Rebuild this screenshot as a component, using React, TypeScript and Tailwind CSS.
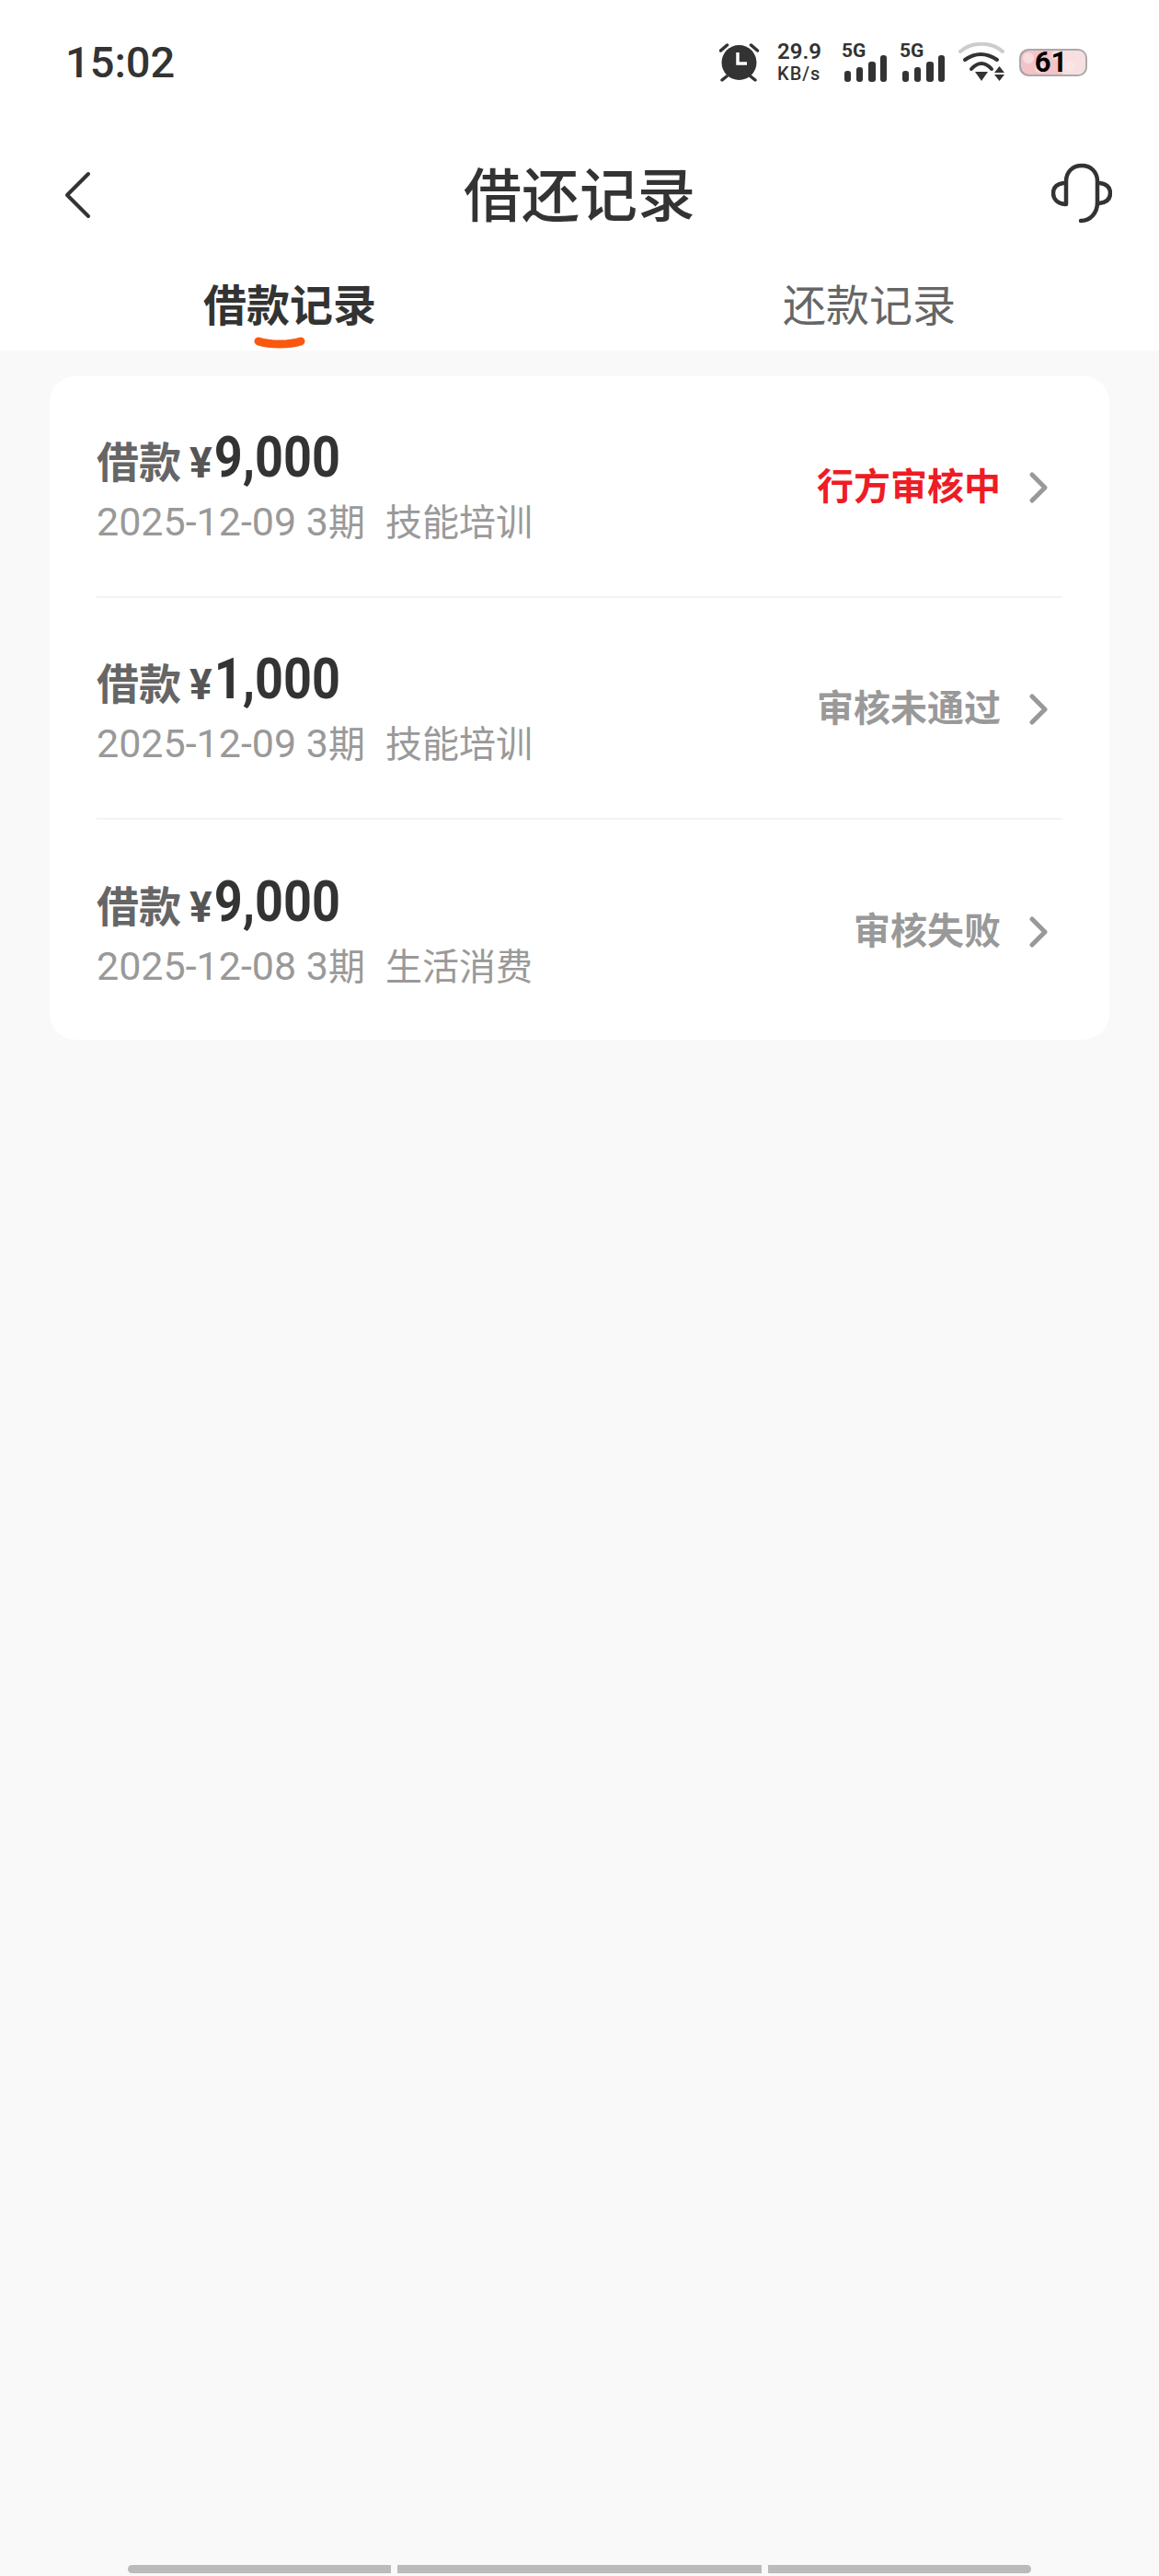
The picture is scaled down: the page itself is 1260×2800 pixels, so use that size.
const font = "font-['Roboto','Noto_Sans_CJK_SC',sans-serif]";

const records = [
  { amount: '9,000', date: '2025-12-09 3', use: '技能培训', status: '行方审核中', red: true },
  { amount: '1,000', date: '2025-12-09 3', use: '技能培训', status: '审核未通过', red: false },
  { amount: '9,000', date: '2025-12-08 3', use: '生活消费', status: '审核失败', red: false },
];

function Signal() {
  return (
    <div className="relative w-[49px] h-[42px]">
      <span className="absolute left-0 top-[-1px] text-[21px] leading-[18px] font-bold text-[#333]">5G</span>
      <svg className="absolute left-0 bottom-0" width="49" height="30" viewBox="0 0 49 30" fill="#333">
        <rect x="3" y="18" width="7" height="12" rx="3" />
        <rect x="16" y="14" width="7" height="16" rx="3" />
        <rect x="29" y="8" width="8" height="22" rx="3" />
        <rect x="42" y="1" width="7" height="29" rx="3" />
      </svg>
    </div>
  );
}

function StatusBar() {
  return (
    <div className="h-[136px] pl-[71px] pr-[78px] flex items-center justify-between">
      <span className="text-[47px] leading-[50px] font-medium text-[#333]">15:02</span>
      <div className="flex items-center">
        <svg width="44" height="44" viewBox="0 0 44 44" fill="#333">
          <circle cx="21.5" cy="22" r="19" />
          <path d="M20 11v12h10" fill="none" stroke="#fff" strokeWidth="3.5" />
          <path d="M1.5 9l7-6M41.5 9l-7-6M3 41l5-4M39 41l-5-4" fill="none" stroke="#333" strokeWidth="3.5" strokeLinecap="round" />
        </svg>
        <div className="flex flex-col w-[50px] ml-[19px] mr-[20px] text-[#333]">
          <span className="text-[24px] leading-[24px] font-semibold">29.9</span>
          <span className="text-[20px] leading-[24px] font-medium tracking-[1px]">KB/s</span>
        </div>
        <div className="flex gap-[14px]">
          <Signal />
          <Signal />
        </div>
        <svg width="52" height="44" viewBox="0 0 52 44" className="ml-[14px]">
          <path d="M3 10C15 -1 37 -1 49 10" fill="none" stroke="#ccc" strokeWidth="4" strokeLinecap="round" />
          <path d="M8 19Q25 7 43 19" fill="none" stroke="#333" strokeWidth="4" strokeLinecap="round" />
          <path d="M15 29Q26 17 37 29" fill="none" stroke="#333" strokeWidth="4" strokeLinecap="round" />
          <path d="M19 32h14l-7 10z" fill="#333" />
          <path d="M40 33l5.5-7 5.5 7zM40 35h11l-5.500 7z" fill="#333" />
        </svg>
        <div className="relative w-[74px] h-[30px] ml-[15px]">
          <div className="absolute inset-0 rounded-[10px] border-2 border-[#aaa] bg-[#f7dfe2] overflow-hidden">
            <div className="absolute inset-y-0 left-0 w-[45px] bg-[#f2c3c8]" />
            <svg className="absolute inset-0" width="70" height="26" viewBox="0 0 70 26" fill="#fbe6e8" opacity="0.7">
              <circle cx="8" cy="8" r="6" />
              <circle cx="20" cy="19" r="5" />
              <circle cx="38" cy="5" r="5" />
              <circle cx="53" cy="17" r="6" />
            </svg>
            <div className="absolute inset-y-[-2px] left-[-2px] w-[47px] rounded-l-[10px] border-2 border-r-0 border-[#222]" />
          </div>
          <span className="absolute inset-0 flex items-center justify-center pr-[5px] text-[31px] leading-[30px] font-bold text-black">61</span>
        </div>
      </div>
    </div>
  );
}

function Header() {
  return (
    <div className="h-[152px] pl-[69px] pr-[51px] flex items-center justify-between relative">
      <svg width="32" height="52" viewBox="0 0 32 52" fill="none" stroke="#333" strokeWidth="4" strokeLinecap="round" strokeLinejoin="round">
        <path d="M27 3L4 26l23 23" />
      </svg>
      <h1 className="absolute left-0 right-0 top-[42px] text-center text-[63px] leading-[72px] font-medium text-[#333]">借还记录</h1>
      <svg width="66" height="66" viewBox="0 0 66 66" fill="none" stroke="#333" strokeWidth="4.5" strokeLinecap="round" className="mt-[-4px]">
        <path d="M16 45V20C16 10 23 3 33 3s17 7 17 17v23c0 12-8 20-18 20" />
        <path d="M13 22C6 23 2 27 2 33s4 11 13 12" />
        <path d="M53 22c7 1 11 5 11 11s-4 10-12 11" />
      </svg>
    </div>
  );
}

function Tabs() {
  return (
    <div className="h-[93px] pt-[17px] flex relative">
      <div className="w-[630px] flex justify-center">
        <span className="text-[47px] leading-[56px] font-bold text-[#333]">借款记录</span>
      </div>
      <div className="w-[630px] flex justify-center">
        <span className="text-[47px] leading-[56px] font-normal text-[#666]">还款记录</span>
      </div>
      <svg className="absolute left-[276px] top-[78px]" width="56" height="15" viewBox="0 0 56 15">
        <path d="M5 5C18 9 38 9 51 5" fill="none" stroke="#f9590f" strokeWidth="9" strokeLinecap="round" />
      </svg>
    </div>
  );
}

function RecordRow({ amount, date, use, status, red, last }: { amount: string; date: string; use: string; status: string; red: boolean; last: boolean }) {
  return (
    <div className={`h-[241px] flex items-center justify-between pr-[15px] ${last ? '' : 'border-b-2 border-[#f3f3f3]'}`}>
      <div className="flex flex-col mt-[8px]">
        <div className="flex items-baseline h-[60px] font-bold">
          <span className="text-[46px] leading-[60px] text-[#666]">借款</span>
          <span className="text-[46px] leading-[60px] text-[#555] ml-[9px] mr-[2px]">¥</span>
          <span className="inline-block origin-bottom scale-y-[1.12] text-[54px] leading-[60px] text-[#333]">{amount}</span>
        </div>
        <div className="leading-[50px] text-[#999] mt-[11px] flex items-baseline">
          <span className="text-[43px]">{date}</span>
          <span className="text-[40px]">期</span>
          <span className="text-[40px] ml-[22px]">{use}</span>
        </div>
      </div>
      <div className="flex items-center gap-[30px] mt-[2px]">
        <span className={`text-[40px] leading-[48px] font-bold ${red ? 'text-[#ee1c25]' : 'text-[#999]'}`}>{status}</span>
        <svg width="22" height="36" viewBox="0 0 22 36" fill="none" stroke="#999" strokeWidth="5" strokeLinecap="round" strokeLinejoin="round">
          <path d="M4 4l14 14L4 32" />
        </svg>
      </div>
    </div>
  );
}

export default function App() {
  return (
    <div className={`w-[1260px] h-[2800px] bg-[#f9f9f9] flex flex-col ${font}`}>
      <div className="bg-white">
        <StatusBar />
        <Header />
        <Tabs />
      </div>
      <div className="mx-[54px] mt-[28px] bg-white rounded-[28px] px-[51px] h-[721px]">
        {records.map((r, i) => (
          <RecordRow key={i} {...r} last={i === records.length - 1} />
        ))}
      </div>
      <div className="mt-auto mb-[3px] mx-[139px] flex gap-[7px]">
        <div className="h-[9px] w-[286px] bg-[#bbb] rounded-l-full" />
        <div className="h-[9px] w-[396px] bg-[#bbb]" />
        <div className="h-[9px] flex-1 bg-[#bbb] rounded-r-full" />
      </div>
    </div>
  );
}
